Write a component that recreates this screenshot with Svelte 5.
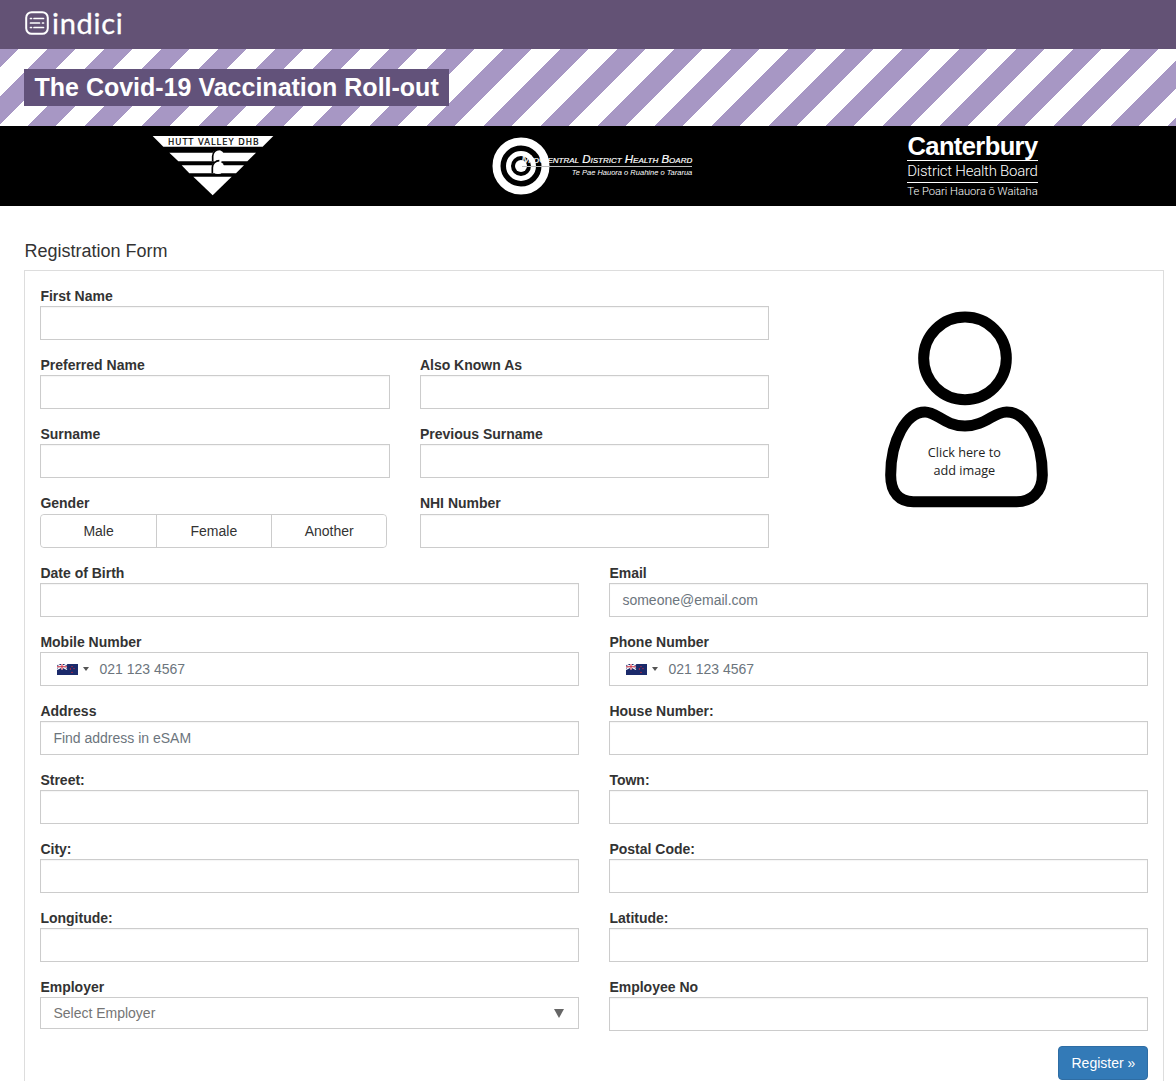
<script>
  const topRows = [
    [{ label: 'Preferred Name' }, { label: 'Also Known As' }],
    [{ label: 'Surname' }, { label: 'Previous Surname' }]
  ];
  const rows = [
    [{ label: 'Date of Birth' }, { label: 'Email', placeholder: 'someone@email.com' }],
    [{ label: 'Mobile Number', phone: true }, { label: 'Phone Number', phone: true }],
    [{ label: 'Address', placeholder: 'Find address in eSAM' }, { label: 'House Number:' }],
    [{ label: 'Street:' }, { label: 'Town:' }],
    [{ label: 'City:' }, { label: 'Postal Code:' }],
    [{ label: 'Longitude:' }, { label: 'Latitude:' }]
  ];
</script>

{#snippet field(f)}
  <div class="field">
    <label>
      <span class="lbl">{f.label}</span>
      {#if f.phone}
        <span class="phone">
          <svg class="flag" viewBox="0 0 21 11" width="21" height="11" aria-hidden="true">
            <rect width="21" height="11" fill="#1b2a6b" />
            <path d="M0 0L10 5.5M10 0L0 5.5" stroke="#fff" stroke-width="1.4" />
            <path d="M5 0V5.5M0 2.75H10" stroke="#fff" stroke-width="2" />
            <path d="M5 0V5.5M0 2.75H10" stroke="#c8283c" stroke-width="1" />
            <g fill="#d8283c">
              <circle cx="15" cy="2.6" r=".7" /><circle cx="13.4" cy="5" r=".7" />
              <circle cx="17" cy="4.6" r=".7" /><circle cx="15" cy="8.4" r=".7" />
            </g>
          </svg>
          <i class="caret"></i>
          <input type="text" placeholder="021 123 4567" />
        </span>
      {:else}
        <input type="text" placeholder={f.placeholder ?? ''} />
      {/if}
    </label>
  </div>
{/snippet}

<header class="topbar">
  <svg class="mark" viewBox="0 0 24 24" width="24" height="24" fill="none" stroke="#fff" aria-hidden="true">
    <rect x="1.2" y="1.2" width="21.6" height="21.6" rx="5.5" stroke-width="2" />
    <path d="M9 7.5H18.5M5.5 7.5H6.5M5.5 12H14.5M17.5 12H18.5M5.5 16.5H6.5M9 16.5H18.5" stroke-width="1.7" stroke-linecap="round" />
  </svg>
  <span class="brand">indici</span>
</header>

<section class="banner">
  <h1>The Covid-19 Vaccination Roll-out</h1>
</section>

<section class="logos">
  <svg class="hutt" viewBox="66 30 366 180" width="122" height="60" aria-label="Hutt Valley DHB">
    <g fill="#fff">
      <polygon points="68,30 430,30 398,62 100,62" />
      <polygon points="118,80 378,80 352,106 145,106" />
      <polygon points="155,118 342,118 318,142 178,142" />
      <polygon points="190,152 305,152 248,208" />
      <circle cx="264" cy="91" r="19" />
      <circle cx="264" cy="125" r="19" />
    </g>
    <path d="M268 70A21 21 0 0 0 248 91V106M268 104A21 21 0 0 0 247 125V142" fill="none" stroke="#000" stroke-width="5" />
    <text x="250" y="56" text-anchor="middle" class="huttname" textLength="272">HUTT VALLEY DHB</text>
  </svg>

  <div class="mid">
    <svg viewBox="0 0 60 60" width="60" height="60" aria-hidden="true">
      <circle cx="30" cy="30" r="24.5" fill="none" stroke="#fff" stroke-width="8" />
      <circle cx="30" cy="30" r="12.5" fill="none" stroke="#fff" stroke-width="5" />
      <circle cx="30" cy="30" r="6" fill="#fff" />
    </svg>
    <div class="midtext">
      <div class="midname">MidCentral District Health Board</div>
      <div class="midsub">Te Pae Hauora o Ruahine o Tararua</div>
    </div>
  </div>

  <div class="cant">
    <div class="cname">Canterbury</div>
    <div class="cdhb">District Health Board</div>
    <div class="csub">Te Poari Hauora ō Waitaha</div>
  </div>
</section>

<main class="page">
  <h2>Registration Form</h2>
  <form class="panel">
    <div class="top">
      <div class="topleft">
        {@render field({ label: 'First Name' })}
        {#each topRows as row}
          <div class="two">
            {@render field(row[0])}
            {@render field(row[1])}
          </div>
        {/each}
        <div class="two last">
          <div class="field">
            <span class="lbl">Gender</span>
            <div class="seg">
              <button type="button">Male</button>
              <button type="button">Female</button>
              <button type="button">Another</button>
            </div>
          </div>
          {@render field({ label: 'NHI Number' })}
        </div>
      </div>
      <div class="photo">
        <svg viewBox="0 0 570 660" width="190" height="220" role="img" aria-label="Add image">
          <circle cx="285" cy="175" r="124" fill="none" stroke="#000" stroke-width="33" />
          <path d="M165 336C200 336 225 378 285 378C345 378 370 336 410 336C470 336 517 420 517 525C517 580 480 605 440 605H130C90 605 62 580 62 525C62 420 110 336 165 336Z" fill="none" stroke="#000" stroke-width="33" />
          <text x="283" y="472" text-anchor="middle" class="photot">Click here to</text>
          <text x="283" y="526" text-anchor="middle" class="photot">add image</text>
        </svg>
      </div>
    </div>

    <div class="grid">
      {#each rows as row}
        {@render field(row[0])}
        {@render field(row[1])}
      {/each}
      <div class="field">
        <label>
          <span class="lbl">Employer</span>
          <span class="select">Select Employer<i class="tri"></i></span>
        </label>
      </div>
      {@render field({ label: 'Employee No' })}
    </div>

    <div class="actions">
      <button type="submit" class="register">Register »</button>
    </div>
  </form>
</main>

<style>
  :global(body) {
    font-family: "Liberation Sans", Arial, sans-serif;
    font-size: 14px;
    line-height: 20px;
    color: #333;
    background: #fff;
    overflow: hidden;
  }
  .topbar {
    height: 49px;
    background: #635275;
    display: flex;
    align-items: center;
    gap: 3px;
    padding-left: 25px;
    color: #fff;
  }
  .mark { margin-top: -3px; }
  .brand {
    font-family: Lato, sans-serif;
    font-weight: 400;
    font-size: 29px;
    letter-spacing: .7px;
    line-height: 44px;
    margin-top: -3px;
    -webkit-text-stroke: .3px #fff;
  }
  .banner {
    height: 77px;
    display: flex;
    align-items: center;
    padding-left: 24px;
    background: repeating-linear-gradient(135deg, #a797c4 -6.75px 13.4px, #fff 13.4px 33.55px);
    box-sizing: border-box;
  }
  h1 {
    margin: 0;
    background: #62527a;
    color: #fff;
    font-size: 25px;
    font-weight: 700;
    line-height: 37px;
    padding: 0 10.5px;
    width: 425px;
    box-sizing: border-box;
    white-space: nowrap;
  }
  .logos {
    height: 80px;
    background: #000;
    color: #fff;
    display: flex;
    align-items: center;
    justify-content: space-between;
    padding: 0 138px 0 152px;
    overflow: hidden;
  }
  .huttname {
    font-size: 25px;
    font-family: "DejaVu Sans", sans-serif;
    fill: #000;
    stroke: #000;
    stroke-width: .5px;
  }
  .mid {
    width: 200px;
    height: 60px;
    display: flex;
  }
  .mid svg { flex: none; }
  .midtext {
    margin-left: -29px;
    margin-top: 17px;
    flex: 1;
    font-family: "Liberation Sans", sans-serif;
    font-style: italic;
    text-align: right;
  }
  .midname {
    font-variant: small-caps;
    font-size: 11.5px;
    line-height: 13px;
    border-bottom: 1px solid #bbb;
    white-space: nowrap;
    -webkit-text-stroke: .2px #fff;
  }
  .midsub {
    font-size: 7.5px;
    line-height: 12px;
    white-space: nowrap;
  }
  .cant {
    width: 131px;
    text-align: center;
    font-family: "Liberation Sans", sans-serif;
    white-space: nowrap;
  }
  .cname {
    font-size: 25.5px;
    line-height: 28px;
    font-weight: 700;
    letter-spacing: -.6px;
  }
  .cdhb {
    font-family: Roboto, sans-serif;
    font-weight: 300;
    font-size: 15px;
    line-height: 21px;
    letter-spacing: -.25px;
    border-top: 1px solid #fff;
    border-bottom: 1px solid #fff;
  }
  .csub {
    font-family: Roboto, sans-serif;
    font-weight: 300;
    font-size: 11.2px;
    line-height: 17px;
  }
  .page { padding: 0 11.6px 0 24.4px; }
  h2 {
    margin: 0;
    font-size: 18px;
    font-weight: 400;
    line-height: 20px;
    padding-top: 35px;
    padding-bottom: 9px;
  }
  .panel {
    border: 1px solid #ddd;
    padding: 15px 15px 40px;
    display: flex;
    flex-direction: column;
  }
  .top {
    display: grid;
    grid-template-columns: 729px 1fr;
    column-gap: 15px;
  }
  .two, .grid {
    display: grid;
    grid-template-columns: 1fr 1fr;
    column-gap: 30px;
  }
  .field { margin-bottom: 15px; min-width: 0; }
  label { display: block; }
  .lbl {
    display: block;
    font-weight: 700;
    line-height: 20px;
  }
  .last .lbl { line-height: 21px; }
  input {
    display: block;
    width: 100%;
    height: 34px;
    box-sizing: border-box;
    border: 1px solid #ccc;
    border-radius: 0;
    padding: 6px 12px;
    font: inherit;
    color: #555;
    background: #fff;
    box-shadow: inset 0 1px 1px rgba(0, 0, 0, .04);
    outline: none;
  }
  input::placeholder { color: #6c757d; opacity: 1; }
  .phone {
    display: flex;
    align-items: center;
    height: 34px;
    box-sizing: border-box;
    border: 1px solid #ccc;
    padding-left: 16px;
  }
  .phone input {
    border: 0;
    box-shadow: none;
    height: 32px;
    padding: 0 0 0 10px;
    flex: 1;
    min-width: 0;
  }
  .flag { flex: none; }
  .caret {
    flex: none;
    margin-left: 5px;
    width: 0;
    height: 0;
    border: 3px solid transparent;
    border-top: 4px solid #555;
    border-bottom: 0;
  }
  .seg {
    display: flex;
    width: 347px;
    height: 34px;
    box-sizing: border-box;
    border: 1px solid #ccc;
    border-radius: 4px;
  }
  .seg button {
    flex: 1;
    border: 0;
    border-left: 1px solid #ccc;
    background: #fff;
    font: inherit;
    color: #333;
    padding: 0;
  }
  .seg button:first-child { border-left: 0; border-radius: 4px 0 0 4px; }
  .seg button:last-child { border-radius: 0 4px 4px 0; }
  .photo {
    display: flex;
    justify-content: center;
    align-items: flex-start;
    padding-top: 14px;
    margin-left: -3px;
  }
  .photot {
    font-family: "Open Sans", sans-serif;
    font-size: 38px;
    fill: #222;
  }
  .select {
    display: flex;
    align-items: center;
    justify-content: space-between;
    height: 32px;
    box-sizing: border-box;
    border: 1px solid #ccc;
    padding: 0 14px 0 12px;
    color: #757575;
  }
  .tri {
    width: 0;
    height: 0;
    border-left: 5px solid transparent;
    border-right: 5px solid transparent;
    border-top: 9px solid #666;
  }
  .actions {
    display: flex;
    justify-content: flex-end;
  }
  .register {
    width: 90px;
    height: 34px;
    border: 1px solid #2e6da4;
    border-radius: 4px;
    background: #337ab7;
    color: #fff;
    font: inherit;
    padding: 0;
  }
</style>
